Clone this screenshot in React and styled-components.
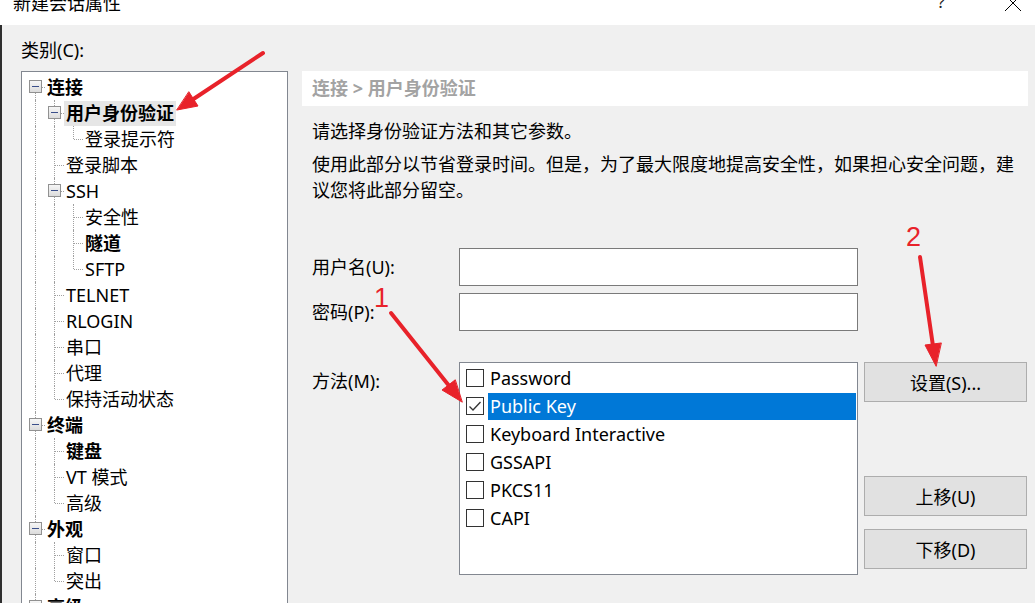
import React from 'react';
import styled, { createGlobalStyle } from 'styled-components';

const GlobalStyle = createGlobalStyle`
  html, body {
    margin: 0;
    height: 603px;
    overflow: hidden;
    background: #f0f0f0;
  }
  body {
    font-family: "Noto Sans", "Noto Sans CJK SC", sans-serif;
    font-size: 18px;
    color: #000;
  }
`;

const TREE = [
  {
    label: '连接',
    bold: true,
    children: [
      { label: '用户身份验证', bold: true, selected: true, children: [{ label: '登录提示符' }] },
      { label: '登录脚本' },
      {
        label: 'SSH',
        children: [{ label: '安全性' }, { label: '隧道', bold: true }, { label: 'SFTP' }],
      },
      { label: 'TELNET' },
      { label: 'RLOGIN' },
      { label: '串口' },
      { label: '代理' },
      { label: '保持活动状态' },
    ],
  },
  {
    label: '终端',
    bold: true,
    children: [{ label: '键盘', bold: true }, { label: 'VT 模式' }, { label: '高级' }],
  },
  { label: '外观', bold: true, children: [{ label: '窗口' }, { label: '突出' }] },
  { label: '高级', bold: true, children: [{ label: '选项' }] },
  { label: '文件传输', bold: true },
];

const METHODS = ['Password', 'Public Key', 'Keyboard Interactive', 'GSSAPI', 'PKCS11', 'CAPI'];

// 트리 노드를 행 목록으로 펼침
function flatten(nodes, depth, guides, out) {
  nodes.forEach((node, i) => {
    const last = i === nodes.length - 1;
    out.push({ ...node, depth, guides, last, first: depth === 0 && i === 0 });
    if (node.children) flatten(node.children, depth + 1, [...guides, !last], out);
  });
  return out;
}

const ROWS = flatten(TREE, 0, [], []);

const App = () => {
  return (
    <Window>
      <GlobalStyle />
      <TitleBar>
        <Title>新建会话属性</Title>
        <HelpGlyph>?</HelpGlyph>
        <CloseGlyph viewBox="0 0 16 16">
          <path d="M0 0 L16 16 M16 0 L0 16" stroke="#000" strokeWidth="1" />
        </CloseGlyph>
      </TitleBar>

      <Body>
        <LeftColumn>
          <CategoryLabel>类别(C):</CategoryLabel>
          <TreeBox>
            {ROWS.map((row, i) => (
              <TreeRow key={i}>
                {row.guides.map((g, j) => (
                  <TreeCell key={j} $up={g} $down={g} />
                ))}
                <TreeCell $up={!row.first} $down={!row.last} $h>
                  {row.children && <Expander />}
                </TreeCell>
                <TreeLabel $bold={row.bold} $selected={row.selected}>
                  {row.label}
                </TreeLabel>
              </TreeRow>
            ))}
          </TreeBox>
        </LeftColumn>

        <RightPanel>
          <Header>连接 &gt; 用户身份验证</Header>
          <Desc>请选择身份验证方法和其它参数。</Desc>
          <Desc $gap>
            使用此部分以节省登录时间。但是，为了最大限度地提高安全性，如果担心安全问题，建议您将此部分留空。
          </Desc>

          <Form>
            <FieldLabel>用户名(U):</FieldLabel>
            <TextInput />
            <span />
            <FieldLabel>密码(P):</FieldLabel>
            <TextInput type="password" />
            <span />
            <Spacer />
            <FieldLabel $top>方法(M):</FieldLabel>
            <ListBox>
              {METHODS.map((m) => (
                <ListItem key={m}>
                  <CheckBox>
                    {m === 'Public Key' && (
                      <svg width="14" height="14" viewBox="0 0 14 14">
                        <path d="M1.5 7.5 L5 11 L12.5 3" fill="none" stroke="#333" strokeWidth="1.3" />
                      </svg>
                    )}
                  </CheckBox>
                  <ItemLabel $selected={m === 'Public Key'}>{m}</ItemLabel>
                </ListItem>
              ))}
            </ListBox>
            <ButtonColumn>
              <DialogButton>设置(S)...</DialogButton>
              <MoveGroup>
                <DialogButton>上移(U)</DialogButton>
                <DialogButton>下移(D)</DialogButton>
              </MoveGroup>
            </ButtonColumn>
          </Form>
        </RightPanel>
      </Body>

      <Annotations viewBox="0 0 1035 603">
        <g stroke="#e8222a" strokeWidth="4" strokeLinecap="round" fill="#e8222a">
          <line x1="263" y1="53" x2="192" y2="100" />
          <polygon points="177,110 198,106 189,92" strokeWidth="1" />
          <line x1="391" y1="313" x2="450" y2="387" />
          <polygon points="462,402 442,390 455,380" strokeWidth="1" />
          <line x1="920" y1="257" x2="933" y2="346" />
          <polygon points="936,366 925,345 941,343" strokeWidth="1" />
        </g>
        <AnnotationText x="374" y="307">1</AnnotationText>
        <AnnotationText x="906" y="246">2</AnnotationText>
      </Annotations>
    </Window>
  );
};

const Window = styled.div`
  position: relative;
  width: 1035px;
  height: 603px;
  overflow: hidden;
`;

const TitleBar = styled.div`
  display: flex;
  align-items: flex-start;
  height: 25px;
  background: #fff;
  padding-left: 13px;
  overflow: hidden;
`;

const Title = styled.span`
  line-height: 18px;
  margin-top: -6px;
  flex: 1;
`;

const HelpGlyph = styled.span`
  font-size: 17px;
  line-height: 17px;
  margin-top: -7px;
  color: #222;
`;

const CloseGlyph = styled.svg`
  width: 16px;
  height: 16px;
  margin: -5px 14px 0 60px;
`;

const Body = styled.div`
  display: flex;
  align-items: flex-start;
  border-left: 2px solid #2f2f2f;
  padding: 15px 0 0 19px;
  height: 578px;
  box-sizing: border-box;
`;

const LeftColumn = styled.div`
  display: flex;
  flex-direction: column;
  width: 267px;
  flex: none;
`;

const CategoryLabel = styled.div`
  line-height: 20px;
  margin-bottom: 11px;
`;

const TreeBox = styled.div`
  background: #fff;
  border: 1px solid #828790;
  height: 560px;
  padding: 2px 0 0 4px;
  box-sizing: border-box;
  overflow: hidden;
`;

const TreeRow = styled.div`
  display: flex;
  align-items: center;
  height: 26px;
`;

const TreeCell = styled.span`
  position: relative;
  flex: none;
  width: 19px;
  height: 26px;

  &::before {
    content: '';
    display: ${(p) => (p.$up || p.$down ? 'block' : 'none')};
    position: absolute;
    left: 9px;
    top: ${(p) => (p.$up ? '0' : '13px')};
    bottom: ${(p) => (p.$down ? '0' : '13px')};
    border-left: 1px dotted #a0a0a0;
  }

  &::after {
    content: '';
    display: ${(p) => (p.$h ? 'block' : 'none')};
    position: absolute;
    left: 10px;
    right: 0;
    top: 13px;
    border-top: 1px dotted #a0a0a0;
  }
`;

const Expander = styled.span`
  position: absolute;
  z-index: 1;
  left: 3px;
  top: 6px;
  width: 13px;
  height: 13px;
  box-sizing: border-box;
  border: 1px solid #919191;
  background: linear-gradient(#f6f6f6, #dcdcdc);

  &::after {
    content: '';
    position: absolute;
    left: 2px;
    right: 2px;
    top: 5px;
    height: 1px;
    background: #3b4f8a;
  }
`;

const TreeLabel = styled.span`
  padding: 0 2px;
  line-height: 25px;
  white-space: nowrap;
  font-weight: ${(p) => (p.$bold ? 700 : 400)};
  background: ${(p) => (p.$selected ? '#e6e6e6' : 'transparent')};
`;

const RightPanel = styled.div`
  display: flex;
  flex-direction: column;
  width: 726px;
  margin-left: 14px;
  margin-top: 31px;
`;

const Header = styled.div`
  height: 35px;
  line-height: 35px;
  background: #fff;
  padding-left: 10px;
  font-weight: 700;
  color: #a3a3a3;
`;

const Desc = styled.p`
  margin: ${(p) => (p.$gap ? '7px' : '12px')} 0 0;
  padding: 0 10px;
  line-height: 26px;
`;

const Form = styled.div`
  display: grid;
  grid-template-columns: 141px 399px 163px;
  grid-template-rows: 38px 38px 17px auto;
  column-gap: 6px;
  row-gap: 7px;
  margin-top: 45px;
  padding-left: 10px;
`;

const FieldLabel = styled.div`
  align-self: ${(p) => (p.$top ? 'start' : 'center')};
  margin-top: ${(p) => (p.$top ? '6px' : '0')};
  line-height: 26px;
`;

const TextInput = styled.input`
  box-sizing: border-box;
  height: 38px;
  border: 1px solid #7a7a7a;
  background: #fff;
  outline: none;
  font: inherit;
`;

const Spacer = styled.div`
  grid-column: 1 / -1;
`;

const ListBox = styled.div`
  box-sizing: border-box;
  height: 213px;
  border: 1px solid #828790;
  background: #fff;
  padding: 1px 1px 0 6px;
`;

const ListItem = styled.div`
  display: flex;
  align-items: center;
  height: 28px;
`;

const CheckBox = styled.span`
  flex: none;
  width: 18px;
  height: 18px;
  box-sizing: border-box;
  border: 1px solid #333;
  background: #fff;
  display: grid;
  place-items: center;
`;

const ItemLabel = styled.span`
  flex: 1;
  margin-left: 4px;
  padding-left: 2px;
  height: 27px;
  line-height: 27px;
  white-space: nowrap;
  background: ${(p) => (p.$selected ? '#0078d7' : 'transparent')};
  color: ${(p) => (p.$selected ? '#fff' : '#000')};
`;

const ButtonColumn = styled.div`
  display: flex;
  flex-direction: column;
`;

const MoveGroup = styled.div`
  display: flex;
  flex-direction: column;
  gap: 13px;
  margin-top: 74px;
`;

const DialogButton = styled.button`
  height: 40px;
  box-sizing: border-box;
  border: 1px solid #adadad;
  background: #e1e1e1;
  font: inherit;
  color: #000;
  padding: 0;
`;

const Annotations = styled.svg`
  position: absolute;
  left: 0;
  top: 0;
  width: 1035px;
  height: 603px;
  pointer-events: none;
`;

const AnnotationText = styled.text`
  font-family: "Liberation Sans", Arial, sans-serif;
  font-size: 27px;
  fill: #e8222a;
`;

export default App;
